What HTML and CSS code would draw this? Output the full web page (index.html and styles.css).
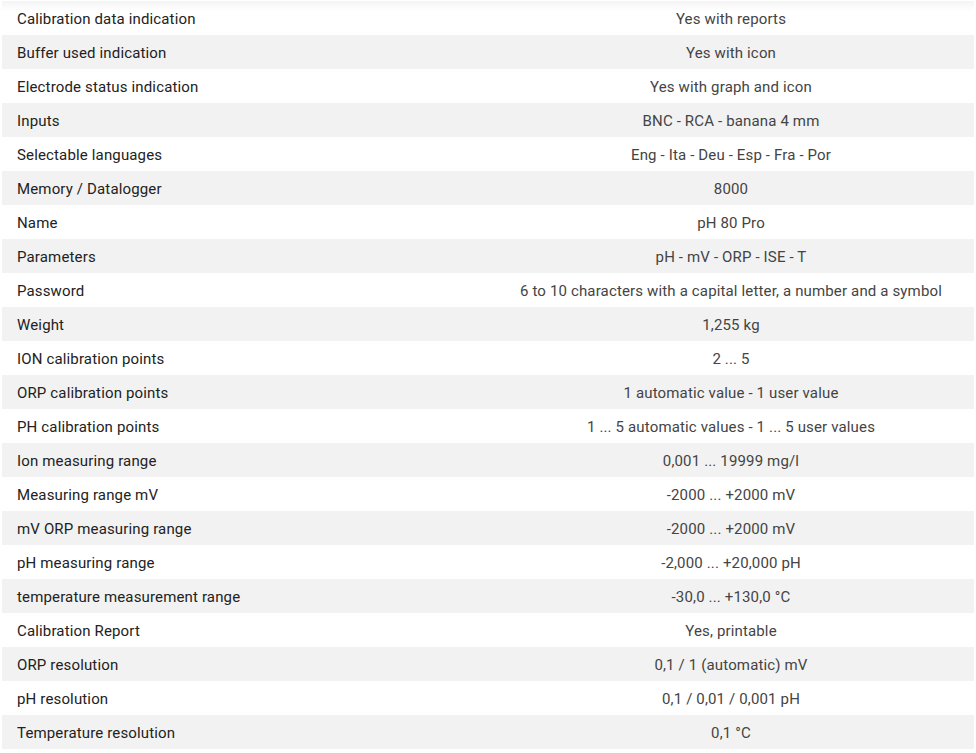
FILE: index.html
```html
<!DOCTYPE html>
<html>
<head>
<meta charset="utf-8">
<link rel="stylesheet" href="styles.css">
</head>
<body>
<table class="specs">
<tbody>
<tr><td class="k">Calibration data indication</td><td class="v">Yes with reports</td></tr>
<tr><td class="k">Buffer used indication</td><td class="v">Yes with icon</td></tr>
<tr><td class="k">Electrode status indication</td><td class="v">Yes with graph and icon</td></tr>
<tr><td class="k">Inputs</td><td class="v">BNC - RCA - banana 4 mm</td></tr>
<tr><td class="k">Selectable languages</td><td class="v">Eng - Ita - Deu - Esp - Fra - Por</td></tr>
<tr><td class="k">Memory / Datalogger</td><td class="v">8000</td></tr>
<tr><td class="k">Name</td><td class="v">pH 80 Pro</td></tr>
<tr><td class="k">Parameters</td><td class="v">pH - mV - ORP - ISE - T</td></tr>
<tr><td class="k">Password</td><td class="v">6 to 10 characters with a capital letter, a number and a symbol</td></tr>
<tr><td class="k">Weight</td><td class="v">1,255 kg</td></tr>
<tr><td class="k">ION calibration points</td><td class="v">2 ... 5</td></tr>
<tr><td class="k">ORP calibration points</td><td class="v">1 automatic value - 1 user value</td></tr>
<tr><td class="k">PH calibration points</td><td class="v">1 ... 5 automatic values - 1 ... 5 user values</td></tr>
<tr><td class="k">Ion measuring range</td><td class="v">0,001 ... 19999 mg/l</td></tr>
<tr><td class="k">Measuring range mV</td><td class="v">-2000 ... +2000 mV</td></tr>
<tr><td class="k">mV ORP measuring range</td><td class="v">-2000 ... +2000 mV</td></tr>
<tr><td class="k">pH measuring range</td><td class="v">-2,000 ... +20,000 pH</td></tr>
<tr><td class="k">temperature measurement range</td><td class="v">-30,0 ... +130,0 °C</td></tr>
<tr><td class="k">Calibration Report</td><td class="v">Yes, printable</td></tr>
<tr><td class="k">ORP resolution</td><td class="v">0,1 / 1 (automatic) mV</td></tr>
<tr><td class="k">pH resolution</td><td class="v">0,1 / 0,01 / 0,001 pH</td></tr>
<tr><td class="k">Temperature resolution</td><td class="v">0,1 °C</td></tr>
</tbody>
</table>
</body>
</html>
```
FILE: styles.css
```css
html, body {
  margin: 0;
  padding: 0;
  background: #fff;
}
body {
  padding: 1px 2px 0 2px;
  font-family: Roboto, "Liberation Sans", sans-serif;
  font-size: 15px;
  letter-spacing: 0.15px;
}
.specs {
  width: 972px;
  border-collapse: collapse;
  table-layout: fixed;
}
.specs tr {
  height: 34px;
}
.specs tr:nth-child(even) {
  background: #f2f2f2;
}
.specs tr:first-child {
  background: linear-gradient(#f4f4f4, #ffffff 10px);
}
.specs td {
  padding: 2px 15px 0 15px;
  vertical-align: middle;
  line-height: 18px;
}
.k {
  width: 486px;
  color: #222;
  box-sizing: border-box;
}
.v {
  color: #444;
  text-align: center;
}
```
